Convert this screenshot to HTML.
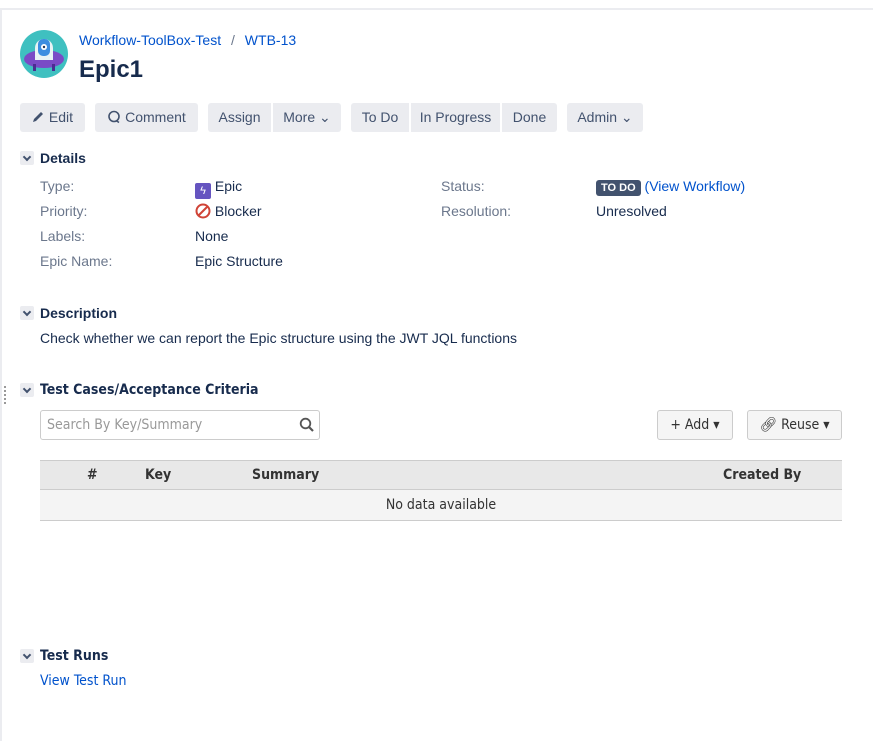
<!DOCTYPE html>
<html><head><meta charset="utf-8"><style>
*{box-sizing:border-box;margin:0;padding:0}
body{width:873px;height:741px;background:#fff;position:relative;overflow:hidden;font-family:"Liberation Sans",sans-serif;font-size:14px;color:#172b4d}
.a{position:absolute;white-space:nowrap}
.top{left:0;top:8px;width:873px;height:2px;background:#ebecf0}
.left{left:0;top:8px;width:2px;height:733px;background:#ebecf0}
a{color:#0052cc;text-decoration:none}
.btn{position:absolute;top:103px;height:29px;background:#ebecf0;border-radius:3px;line-height:29px;font-size:14px;color:#42526e;text-align:center}
.lbl{color:#6b778c}
.tw{position:absolute;width:14px;height:14px;background:#ebecf0;border-radius:2px}
.tw:after{content:"";position:absolute;left:4px;top:3px;width:4px;height:4px;border-right:2px solid #42526e;border-bottom:2px solid #42526e;transform:rotate(45deg)}
h3{position:absolute;font-size:14px;font-weight:bold;color:#172b4d}
.f{font-family:"DejaVu Sans Condensed","Liberation Sans Narrow","Liberation Sans",sans-serif}
</style></head><body>
<div class="a top"></div><div class="a left"></div>
<svg class="a" style="left:20px;top:30px" width="48" height="48" viewBox="0 0 48 48">
<circle cx="24" cy="24" r="24" fill="#3fc0c0"/>
<ellipse cx="24" cy="29" rx="20" ry="9" fill="#7a4bc6"/>
<rect x="13" y="34" width="3" height="7" fill="#4b2c91"/><rect x="32" y="34" width="3" height="7" fill="#4b2c91"/>
<path d="M15 30 V18 a9 9 0 0 1 18 0 V30 Z" fill="#e9f3f5"/>
<rect x="18" y="9" width="12" height="17" rx="5" fill="#3d8ee0"/>
<circle cx="24" cy="17" r="3" fill="#fff"/><circle cx="24" cy="17" r="1.2" fill="#253858"/>
</svg>
<div class="a" style="left:79px;top:32px;font-size:14px"><a>Workflow-ToolBox-Test</a> <span style="color:#6b778c;padding:0 6px">/</span> <a>WTB-13</a></div>
<div class="a" style="left:79px;top:56px;font-size:24px;font-weight:bold;color:#172b4d">Epic1</div>

<div class="btn" style="left:20px;width:65px"><svg width="13" height="13" viewBox="0 0 13 13" style="vertical-align:-1px"><path d="M1 12 L2 9 L9 2 L11 4 L4 11 Z" fill="#42526e"/></svg> Edit</div>
<div class="btn" style="left:95px;width:103px"><svg width="14" height="14" viewBox="0 0 14 14" style="vertical-align:-2px"><circle cx="7" cy="6.5" r="5" fill="none" stroke="#42526e" stroke-width="1.6"/><path d="M9 10.5 L12 12.5" stroke="#42526e" stroke-width="1.6"/></svg> Comment</div>
<div class="btn" style="left:208px;width:63px;border-radius:3px 0 0 3px">Assign</div>
<div class="btn" style="left:273px;width:68px;border-radius:0 3px 3px 0">More ⌄</div>
<div class="btn" style="left:351px;width:58px;border-radius:3px 0 0 3px">To Do</div>
<div class="btn" style="left:411px;width:89px;border-radius:0">In Progress</div>
<div class="btn" style="left:502px;width:55px;border-radius:0 3px 3px 0">Done</div>
<div class="btn" style="left:567px;width:76px">Admin ⌄</div>

<div class="tw" style="left:20px;top:151px"></div><h3 style="left:40px;top:150px;font-size:14px">Details</h3>
<div class="a lbl" style="left:40px;top:178px">Type:</div>
<div class="a" style="left:195px;top:178px"><span style="display:inline-block;width:16px;height:16px;background:#6554c0;border-radius:2px;color:#fff;font-size:11px;text-align:center;line-height:16px;vertical-align:-3px">ϟ</span> Epic</div>
<div class="a lbl" style="left:40px;top:203px">Priority:</div>
<div class="a" style="left:195px;top:203px"><svg width="16" height="16" viewBox="0 0 16 16" style="vertical-align:-3px"><circle cx="8" cy="8" r="6.5" fill="none" stroke="#d04437" stroke-width="2"/><path d="M3.5 12.5 L12.5 3.5" stroke="#d04437" stroke-width="2"/></svg> Blocker</div>
<div class="a lbl" style="left:40px;top:228px">Labels:</div><div class="a" style="left:195px;top:228px">None</div>
<div class="a lbl" style="left:40px;top:253px">Epic Name:</div><div class="a" style="left:195px;top:253px">Epic Structure</div>
<div class="a lbl" style="left:441px;top:178px">Status:</div>
<div class="a" style="left:596px;top:178px"><span style="display:inline-block;background:#42526e;color:#fff;font-size:11px;font-weight:bold;padding:0 5px;border-radius:3px;line-height:16px">TO DO</span> <a>(View Workflow)</a></div>
<div class="a lbl" style="left:441px;top:203px">Resolution:</div><div class="a" style="left:596px;top:203px">Unresolved</div>

<div class="tw" style="left:20px;top:306px"></div><h3 style="left:40px;top:305px">Description</h3>
<div class="a" style="left:40px;top:330px">Check whether we can report the Epic structure using the JWT JQL functions</div>

<div class="a" style="left:4px;top:386px;width:2px;height:18px;border-left:2px dotted #999"></div>
<div class="tw" style="left:20px;top:383px"></div><h3 class="f" style="left:40px;top:382px">Test Cases/Acceptance Criteria</h3>
<div class="a f" style="left:40px;top:410px;width:280px;height:30px;border:1px solid #ccc;border-radius:3px;color:#999;font-size:14px;line-height:28px;padding-left:6px">Search By Key/Summary
<svg style="position:absolute;right:4px;top:6px" width="16" height="16" viewBox="0 0 16 16"><circle cx="6.5" cy="6.5" r="4.8" fill="none" stroke="#555" stroke-width="1.8"/><path d="M10 10 L14 14" stroke="#555" stroke-width="2.2"/></svg></div>
<div class="a f" style="left:657px;top:410px;width:76px;height:30px;border:1px solid #ccc;background:#f5f5f5;border-radius:3px;text-align:center;line-height:28px;color:#333">+ Add ▾</div>
<div class="a f" style="left:747px;top:410px;width:95px;height:30px;border:1px solid #ccc;background:#f5f5f5;border-radius:3px;text-align:center;line-height:28px;color:#333">🔗︎ Reuse ▾</div>
<div class="a f" style="left:40px;top:460px;width:802px;height:30px;background:#e8e8e8;border-top:1px solid #ccc;border-bottom:1px solid #ccc;font-weight:bold;color:#333;line-height:28px">
<span class="a" style="left:47px">#</span><span class="a" style="left:105px">Key</span><span class="a" style="left:212px">Summary</span><span class="a" style="left:683px">Created By</span></div>
<div class="a f" style="left:40px;top:490px;width:802px;height:31px;background:#f4f4f4;border-bottom:1px solid #ccc;text-align:center;line-height:30px;color:#333">No data available</div>

<div class="tw" style="left:20px;top:649px"></div><h3 class="f" style="left:40px;top:648px">Test Runs</h3>
<div class="a f" style="left:40px;top:673px"><a>View Test Run</a></div>
</body></html>
